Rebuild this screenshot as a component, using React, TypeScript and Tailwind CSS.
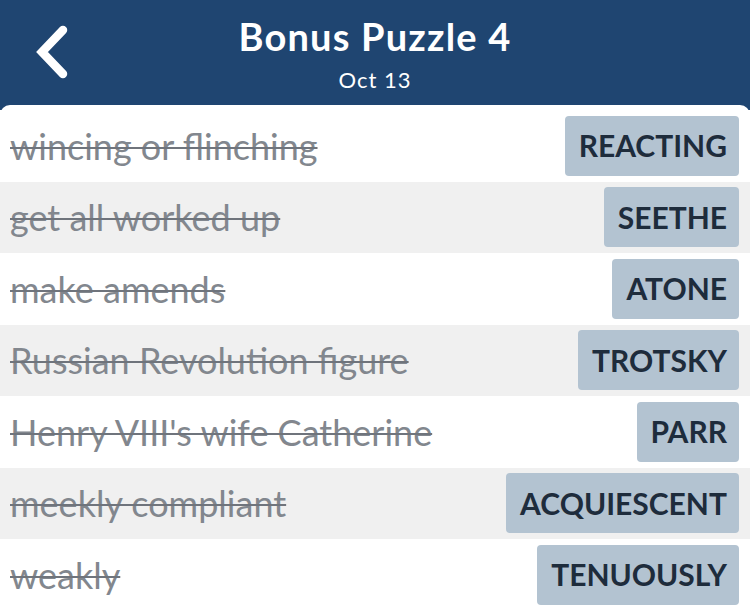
import React from "react";

const clues = [
  { clue: "wincing or flinching", answer: "REACTING" },
  { clue: "get all worked up", answer: "SEETHE" },
  { clue: "make amends", answer: "ATONE" },
  { clue: "Russian Revolution figure", answer: "TROTSKY" },
  { clue: "Henry VIII's wife Catherine", answer: "PARR" },
  { clue: "meekly compliant", answer: "ACQUIESCENT" },
  { clue: "weakly", answer: "TENUOUSLY" },
];

function BackIcon() {
  return (
    <svg width="38" height="54" viewBox="0 0 38 54" fill="none">
      <path
        d="M30 5 L9 27 L30 49"
        stroke="white"
        strokeWidth="8.5"
        strokeLinecap="round"
        strokeLinejoin="miter"
      />
    </svg>
  );
}

export default function App() {
  return (
    <div
      className="w-[750px] h-[611px] overflow-hidden bg-[#1f4571]"
      style={{ fontFamily: "Lato, 'Noto Sans', sans-serif" }}
    >
      <header className="relative h-[105px] flex flex-col items-center text-white">
        <div className="absolute left-[33px] top-[25px]">
          <BackIcon />
        </div>
        <h1 className="mt-[14px] text-[38px] leading-[44px] font-bold tracking-[1.2px]">
          Bonus Puzzle 4
        </h1>
        <p className="mt-[8px] text-[22px] leading-[28px] tracking-[1px]">Oct 13</p>
      </header>
      <div className="bg-white rounded-t-[10px] pt-[5px] h-[506px]">
        {clues.map((c, i) => (
          <div
            key={c.answer}
            className={`h-[71.5px] flex items-center justify-between pl-[10px] pr-[11px] ${
              i % 2 === 1 ? "bg-[#f0f0f0]" : "bg-white"
            }`}
          >
            <span className="text-[36px] text-[#82878e] line-through decoration-[1.5px] decoration-[#6f747c]">
              {c.clue}
            </span>
            <span className="h-[60px] flex items-center bg-[#b3c3d1] rounded-[4px] pl-[14px] pr-[12px] text-[30px] font-bold text-[#1e2c3c]">
              {c.answer}
            </span>
          </div>
        ))}
      </div>
    </div>
  );
}
